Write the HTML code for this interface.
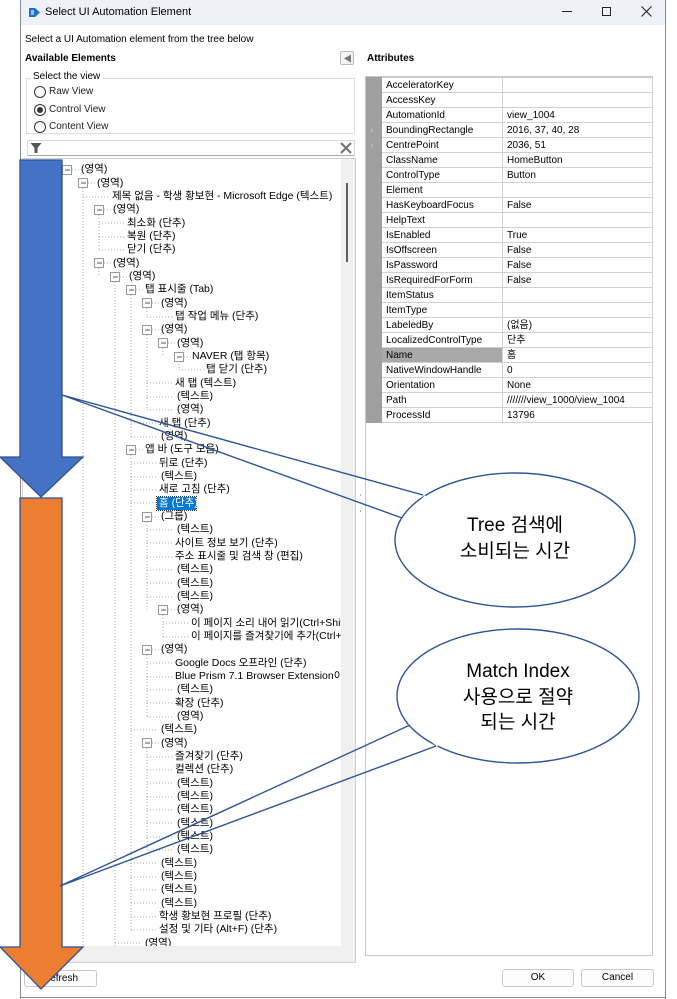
<!DOCTYPE html>
<html><head><meta charset="utf-8">
<style>
*{margin:0;padding:0;box-sizing:border-box}
body{width:677px;height:999px;background:#fff;position:relative;overflow:hidden;font-family:"Liberation Sans","Noto Sans CJK KR",sans-serif;font-size:11px;color:#000}
.a{position:absolute;white-space:nowrap}
#tree{position:absolute;left:0;top:0;width:677px;height:999px;clip-path:inset(158px 336px 53px 22px)}
#tree .r{position:absolute;white-space:nowrap;font-size:10.5px;line-height:13px;height:13px}
table.at{position:absolute;left:366px;top:77px;border-collapse:collapse;font-size:10px}
table.at td{height:15px;border:1px solid #d0d0d0;padding:0 4px;line-height:13px;white-space:nowrap}
table.at td.g{background:#a0a0a0;width:15px;border-color:#a0a0a0;color:#ccc;padding:0 3px}
table.at td.n{width:121px}
table.at td.v{width:150px}
.btn{position:absolute;border:1px solid #c8c8c8;border-radius:3px;background:#fdfdfd;text-align:center;font-size:10px;line-height:16px}
</style></head><body>

<div class="a" style="left:20px;top:0;width:1px;height:999px;background:#8a8a8a"></div>
<div class="a" style="left:665px;top:0;width:1px;height:999px;background:#8a8a8a"></div>
<div class="a" style="left:20px;top:997px;width:646px;height:1px;background:#8a8a8a"></div>
<div class="a" style="left:21px;top:0;width:644px;height:25px;background:#eef2f8"></div>
<svg class="a" style="left:28px;top:6px" width="13" height="13" viewBox="0 0 13 13"><path d="M1 2h6l5 4.5-5 4.5H1z" fill="#1f6fc4"/><rect x="3" y="4" width="3" height="5" fill="#8fc3f2"/></svg>
<div class="a" style="left:45px;top:6px;font-size:11px">Select UI Automation Element</div>
<div class="a" style="left:562px;top:11px;width:10px;height:1px;background:#222"></div>
<div class="a" style="left:602px;top:7px;width:9px;height:9px;border:1px solid #222"></div>
<svg class="a" style="left:641px;top:6px" width="11" height="11"><path d="M0.5 0.5L10.5 10.5M10.5 0.5L0.5 10.5" stroke="#222" stroke-width="1.1"/></svg>

<div class="a" style="left:25px;top:34px;font-size:10px">Select a UI Automation element from the tree below</div>
<div class="a" style="left:25px;top:53px;font-size:10px;font-weight:bold">Available Elements</div>
<div class="a" style="left:340px;top:51px;width:14px;height:14px;border:1px solid #bbb;border-radius:2px;background:#f4f4f4"></div>
<svg class="a" style="left:343px;top:54px" width="9" height="9"><path d="M8 0.5L1 4.5 8 8.5z" fill="#777"/></svg>

<div class="a" style="left:26px;top:78px;width:329px;height:56px;border:1px solid #dcdcdc"></div>
<div class="a" style="left:31px;top:71px;background:#fff;padding:0 2px;font-size:10px">Select the view</div>
<div class="a" style="left:34px;top:86px;width:12px;height:12px;border:1px solid #333;border-radius:50%"></div>
<div class="a" style="left:49px;top:86px;font-size:10px;color:#222">Raw View</div>
<div class="a" style="left:34px;top:104px;width:12px;height:12px;border:1px solid #333;border-radius:50%"></div>
<div class="a" style="left:37px;top:107px;width:6px;height:6px;background:#333;border-radius:50%"></div>
<div class="a" style="left:49px;top:104px;font-size:10px;color:#222">Control View</div>
<div class="a" style="left:34px;top:121px;width:12px;height:12px;border:1px solid #333;border-radius:50%"></div>
<div class="a" style="left:49px;top:121px;font-size:10px;color:#222">Content View</div>

<div class="a" style="left:27px;top:140px;width:328px;height:16px;border:1px solid #d8d8d8;border-bottom:1px solid #aaa"></div>
<svg class="a" style="left:30px;top:142px" width="12" height="12"><path d="M0.5 1h11L7.5 6v5h-3V6z" fill="#555"/></svg>
<svg class="a" style="left:340px;top:142px" width="12" height="12"><path d="M1 1L11 11M11 1L1 11" stroke="#777" stroke-width="2.2"/></svg>

<div class="a" style="left:22px;top:158px;width:334px;height:805px;background:#f0f0f0;border:1px solid #d0d0d0"></div>
<div class="a" style="left:23px;top:159px;width:318px;height:787px;background:#fff"></div>
<div class="a" style="left:346px;top:183px;width:2px;height:79px;background:#606060"></div>

<div id="tree">
<svg class="a" style="left:0;top:0" width="677" height="999">
<g stroke="#a8a8a8" stroke-width="1" stroke-dasharray="1,2" fill="none">
<path d="M83 188V946 M99 215V250 M99 268V277 M115 282V946 M131 295V437 M147 308V317 M147 335V410 M163 348V357 M179 361V370 M131 455V930 M147 522V610 M163 615V637 M147 655V717 M147 748V850"/>
<path d="M83 197H109 M99 223H124 M99 237H124 M99 250H124 M147 317H172 M147 383H172 M147 397H172 M147 410H172 M131 423H156 M131 437H156 M131 463H156 M131 477H156 M131 490H156 M131 503H156 M147 530H172 M147 543H172 M147 557H172 M147 570H172 M147 583H172 M147 597H172 M163 623H188 M163 637H188 M179 370H204 M147 663H172 M147 677H172 M147 690H172 M147 703H172 M147 717H172 M131 730H156 M147 757H172 M147 770H172 M147 783H172 M147 797H172 M147 810H172 M147 823H172 M147 837H172 M147 850H172 M131 863H156 M131 877H156 M131 890H156 M131 903H156 M131 917H156 M131 930H156 M115 943H140"/>
<path d="M72 170H79 M88 183H95 M104 210H111 M104 263H111 M120 277H127 M136 290H143 M152 303H159 M152 330H159 M168 343H175 M184 357H191 M136 450H143 M152 517H159 M168 610H175 M152 650H159 M152 743H159"/>
</g>
<g fill="#fff" stroke="#999">
<rect x="62.5" y="165.5" width="9" height="9"/><rect x="78.5" y="178.5" width="9" height="9"/><rect x="94.5" y="205.5" width="9" height="9"/><rect x="94.5" y="258.5" width="9" height="9"/><rect x="110.5" y="272.5" width="9" height="9"/><rect x="126.5" y="285.5" width="9" height="9"/><rect x="142.5" y="298.5" width="9" height="9"/><rect x="142.5" y="325.5" width="9" height="9"/><rect x="158.5" y="338.5" width="9" height="9"/><rect x="174.5" y="352.5" width="9" height="9"/><rect x="126.5" y="445.5" width="9" height="9"/><rect x="142.5" y="512.5" width="9" height="9"/><rect x="158.5" y="605.5" width="9" height="9"/><rect x="142.5" y="645.5" width="9" height="9"/><rect x="142.5" y="738.5" width="9" height="9"/>
</g>
<g stroke="#3a5a90" stroke-width="1">
<path d="M65 170h5 M81 183h5 M97 210h5 M97 263h5 M113 277h5 M129 290h5 M145 303h5 M145 330h5 M161 343h5 M177 357h5 M129 450h5 M145 517h5 M161 610h5 M145 650h5 M145 743h5"/>
</g>
</svg>
<div class="a" style="left:157px;top:497px;width:39px;height:13px;background:#0078d7;outline:1px dotted #333"></div>
<div class="r" style="left:81px;top:163px">(영역)</div>
<div class="r" style="left:97px;top:177px">(영역)</div>
<div class="r" style="left:112px;top:190px">제목 없음 - 학생 황보현 - Microsoft Edge (텍스트)</div>
<div class="r" style="left:113px;top:203px">(영역)</div>
<div class="r" style="left:127px;top:217px">최소화 (단추)</div>
<div class="r" style="left:127px;top:230px">복원 (단추)</div>
<div class="r" style="left:127px;top:243px">닫기 (단추)</div>
<div class="r" style="left:113px;top:257px">(영역)</div>
<div class="r" style="left:129px;top:270px">(영역)</div>
<div class="r" style="left:145px;top:283px">탭 표시줄 (Tab)</div>
<div class="r" style="left:161px;top:297px">(영역)</div>
<div class="r" style="left:175px;top:310px">탭 작업 메뉴 (단추)</div>
<div class="r" style="left:161px;top:323px">(영역)</div>
<div class="r" style="left:177px;top:337px">(영역)</div>
<div class="r" style="left:192px;top:350px">NAVER (탭 항목)</div>
<div class="r" style="left:206px;top:363px">탭 닫기 (단추)</div>
<div class="r" style="left:175px;top:377px">새 탭 (텍스트)</div>
<div class="r" style="left:177px;top:390px">(텍스트)</div>
<div class="r" style="left:177px;top:403px">(영역)</div>
<div class="r" style="left:159px;top:417px">새 탭 (단추)</div>
<div class="r" style="left:161px;top:430px">(영역)</div>
<div class="r" style="left:145px;top:443px">앱 바 (도구 모음)</div>
<div class="r" style="left:159px;top:457px">뒤로 (단추)</div>
<div class="r" style="left:161px;top:470px">(텍스트)</div>
<div class="r" style="left:159px;top:483px">새로 고침 (단추)</div>
<div class="r" style="left:159px;top:497px;color:#fff">홈 (단추)</div>
<div class="r" style="left:161px;top:510px">(그룹)</div>
<div class="r" style="left:177px;top:523px">(텍스트)</div>
<div class="r" style="left:175px;top:537px">사이트 정보 보기 (단추)</div>
<div class="r" style="left:175px;top:550px">주소 표시줄 및 검색 창 (편집)</div>
<div class="r" style="left:177px;top:563px">(텍스트)</div>
<div class="r" style="left:177px;top:577px">(텍스트)</div>
<div class="r" style="left:177px;top:590px">(텍스트)</div>
<div class="r" style="left:177px;top:603px">(영역)</div>
<div class="r" style="left:191px;top:617px">이 페이지 소리 내어 읽기(Ctrl+Shift+U)</div>
<div class="r" style="left:191px;top:630px">이 페이지를 즐겨찾기에 추가(Ctrl+D)</div>
<div class="r" style="left:161px;top:643px">(영역)</div>
<div class="r" style="left:175px;top:657px">Google Docs 오프라인 (단추)</div>
<div class="r" style="left:175px;top:670px">Blue Prism 7.1 Browser Extension이 사용</div>
<div class="r" style="left:177px;top:683px">(텍스트)</div>
<div class="r" style="left:175px;top:697px">확장 (단추)</div>
<div class="r" style="left:177px;top:710px">(영역)</div>
<div class="r" style="left:161px;top:723px">(텍스트)</div>
<div class="r" style="left:161px;top:737px">(영역)</div>
<div class="r" style="left:175px;top:750px">즐겨찾기 (단추)</div>
<div class="r" style="left:175px;top:763px">컬렉션 (단추)</div>
<div class="r" style="left:177px;top:777px">(텍스트)</div>
<div class="r" style="left:177px;top:790px">(텍스트)</div>
<div class="r" style="left:177px;top:803px">(텍스트)</div>
<div class="r" style="left:177px;top:817px">(텍스트)</div>
<div class="r" style="left:177px;top:830px">(텍스트)</div>
<div class="r" style="left:177px;top:843px">(텍스트)</div>
<div class="r" style="left:161px;top:857px">(텍스트)</div>
<div class="r" style="left:161px;top:870px">(텍스트)</div>
<div class="r" style="left:161px;top:883px">(텍스트)</div>
<div class="r" style="left:161px;top:897px">(텍스트)</div>
<div class="r" style="left:159px;top:910px">학생 황보현 프로필 (단추)</div>
<div class="r" style="left:159px;top:923px">설정 및 기타 (Alt+F) (단추)</div>
<div class="r" style="left:145px;top:937px">(영역)</div>
</div>

<div class="a" style="left:367px;top:53px;font-size:10px;font-weight:bold">Attributes</div>
<div class="a" style="left:365px;top:76px;width:288px;height:880px;border:1px solid #c8c8c8"></div>
<div class="a" style="left:360px;top:494px;width:1px;height:2px;background:#aaa"></div>
<div class="a" style="left:360px;top:510px;width:1px;height:2px;background:#aaa"></div>
<table class="at">
<tr><td class="g"></td><td class="n">AcceleratorKey</td><td class="v"></td></tr>
<tr><td class="g"></td><td class="n">AccessKey</td><td class="v"></td></tr>
<tr><td class="g"></td><td class="n">AutomationId</td><td class="v">view_1004</td></tr>
<tr><td class="g">›</td><td class="n">BoundingRectangle</td><td class="v">2016, 37, 40, 28</td></tr>
<tr><td class="g">›</td><td class="n">CentrePoint</td><td class="v">2036, 51</td></tr>
<tr><td class="g"></td><td class="n">ClassName</td><td class="v">HomeButton</td></tr>
<tr><td class="g"></td><td class="n">ControlType</td><td class="v">Button</td></tr>
<tr><td class="g"></td><td class="n">Element</td><td class="v"></td></tr>
<tr><td class="g"></td><td class="n">HasKeyboardFocus</td><td class="v">False</td></tr>
<tr><td class="g"></td><td class="n">HelpText</td><td class="v"></td></tr>
<tr><td class="g"></td><td class="n">IsEnabled</td><td class="v">True</td></tr>
<tr><td class="g"></td><td class="n">IsOffscreen</td><td class="v">False</td></tr>
<tr><td class="g"></td><td class="n">IsPassword</td><td class="v">False</td></tr>
<tr><td class="g"></td><td class="n">IsRequiredForForm</td><td class="v">False</td></tr>
<tr><td class="g"></td><td class="n">ItemStatus</td><td class="v"></td></tr>
<tr><td class="g"></td><td class="n">ItemType</td><td class="v"></td></tr>
<tr><td class="g"></td><td class="n">LabeledBy</td><td class="v">(없음)</td></tr>
<tr><td class="g"></td><td class="n">LocalizedControlType</td><td class="v">단추</td></tr>
<tr><td class="g"></td><td class="n" style="background:#a8a8a8">Name</td><td class="v">홈</td></tr>
<tr><td class="g"></td><td class="n">NativeWindowHandle</td><td class="v">0</td></tr>
<tr><td class="g"></td><td class="n">Orientation</td><td class="v">None</td></tr>
<tr><td class="g"></td><td class="n">Path</td><td class="v">///////view_1000/view_1004</td></tr>
<tr><td class="g"></td><td class="n">ProcessId</td><td class="v">13796</td></tr>
</table>

<div class="btn" style="left:24px;top:970px;width:73px;height:17px">Refresh</div>
<div class="btn" style="left:502px;top:969px;width:72px;height:18px">OK</div>
<div class="btn" style="left:581px;top:969px;width:73px;height:18px">Cancel</div>

<svg class="a" style="left:0;top:0" width="677" height="999">
<polygon points="20,160 62,160 62,457 83,457 41,497 0,457 20,457" fill="#4472c4" stroke="#2f528f" stroke-width="1.3"/>
<polygon points="20,498 62,498 62,947 83,947 41,989 0,947 20,947" fill="#ed7d31" stroke="#2f528f" stroke-width="1.3"/>
<ellipse cx="515" cy="540" rx="120" ry="67" fill="#fff" stroke="#2f5597" stroke-width="1.4"/>
<polygon points="425,495 401,520 430,528" fill="#fff"/>
<path d="M423 495L62 395L402 518" fill="none" stroke="#2f5597" stroke-width="1.4"/>
<ellipse cx="518" cy="696" rx="121" ry="67" fill="#fff" stroke="#2f5597" stroke-width="1.4"/>
<polygon points="408,724 438,747 430,715" fill="#fff"/>
<path d="M410 725L60 886L436 746" fill="none" stroke="#2f5597" stroke-width="1.4"/>
</svg>
<div class="a" style="left:395px;top:513px;width:240px;text-align:center;font-size:19px;line-height:26px;font-family:'Liberation Sans','Noto Sans CJK KR',sans-serif">Tree 검색에<br>소비되는 시간</div>
<div class="a" style="left:398px;top:659px;width:240px;text-align:center;font-size:19px;line-height:25.5px;font-family:'Liberation Sans','Noto Sans CJK KR',sans-serif">Match Index<br>사용으로 절약<br>되는 시간</div>
</body></html>
